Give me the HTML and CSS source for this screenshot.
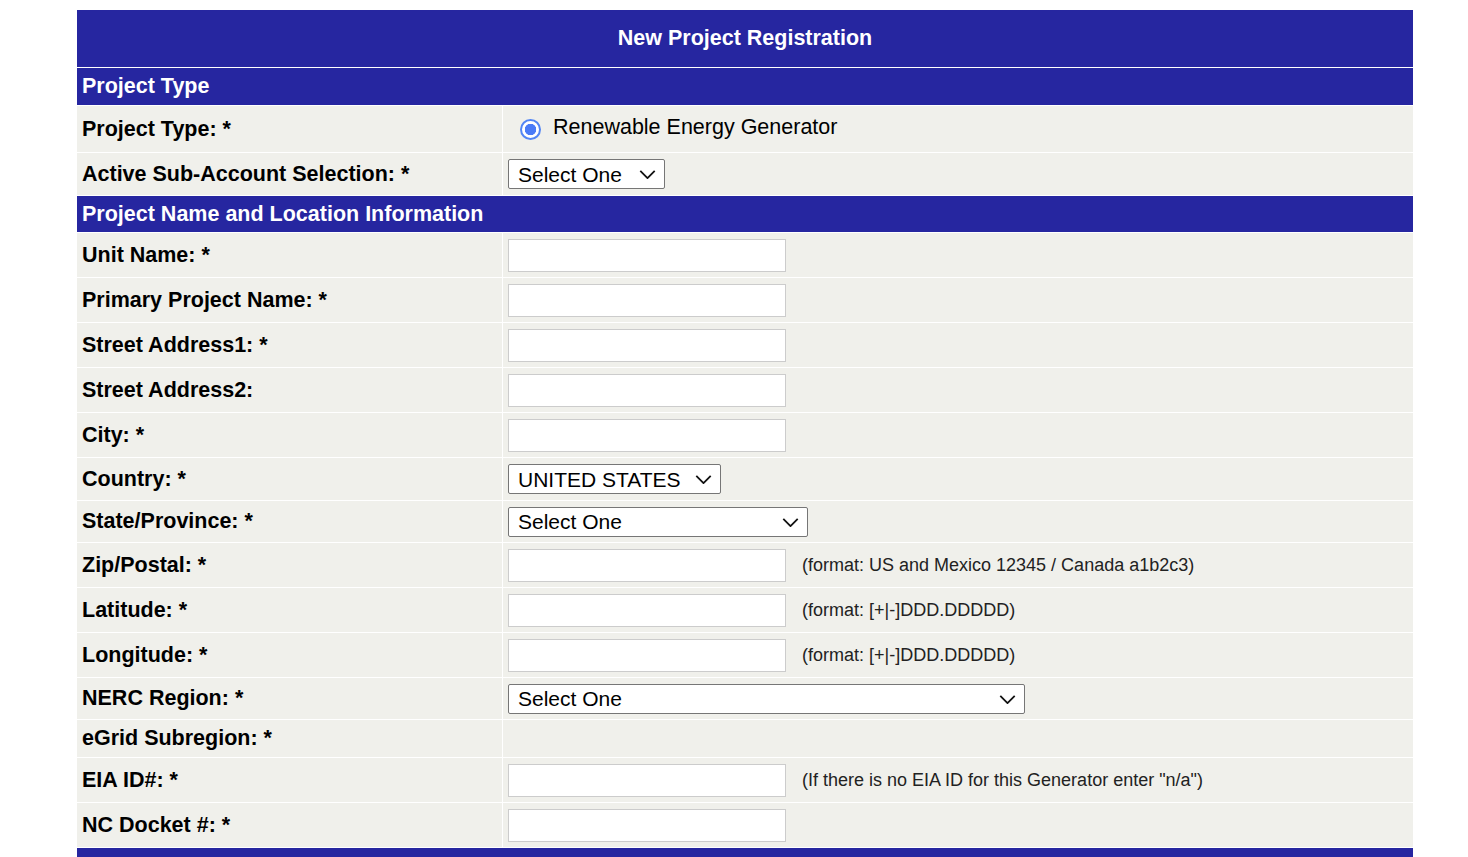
FILE: index.html
```html
<!DOCTYPE html>
<html lang="en">
<head>
  <meta charset="UTF-8">
  <meta name="viewport" content="width=device-width, initial-scale=1.0">
  <title>New Project Registration</title>
  <link rel="stylesheet" href="styles.css">
</head>
<body>
  <form name="newProject" method="POST">
    <table class="reg">
      <tr class="title-row">
        <td colspan="2" class="title">New Project Registration</td>
      </tr>
      <tr class="section-row">
        <td colspan="2" class="section">Project Type</td>
      </tr>
      <tr class="row-type">
        <td class="label">Project Type: *</td>
        <td class="value">
          <label class="radio"><input type="radio" name="projectType" value="REG" checked><span>Renewable Energy Generator</span></label>
        </td>
      </tr>
      <tr class="row-select">
        <td class="label">Active Sub-Account Selection: *</td>
        <td class="value">
          <span class="select-wrap">
            <select name="subAccount" class="sel-sub">
              <option value="">Select One</option>
            </select>
            <svg class="chevron" viewBox="0 0 18 10"><path d="M1 1l8 8 8-8" /></svg>
          </span>
        </td>
      </tr>
      <tr class="section-row">
        <td colspan="2" class="section short">Project Name and Location Information</td>
      </tr>
      <tr class="row-input">
        <td class="label">Unit Name: *</td>
        <td class="value"><input type="text" name="unitName"></td>
      </tr>
      <tr class="row-input">
        <td class="label">Primary Project Name: *</td>
        <td class="value"><input type="text" name="projectName"></td>
      </tr>
      <tr class="row-input">
        <td class="label">Street Address1: *</td>
        <td class="value"><input type="text" name="address1"></td>
      </tr>
      <tr class="row-input">
        <td class="label">Street Address2:</td>
        <td class="value"><input type="text" name="address2"></td>
      </tr>
      <tr class="row-input">
        <td class="label">City: *</td>
        <td class="value"><input type="text" name="city"></td>
      </tr>
      <tr class="row-select">
        <td class="label">Country: *</td>
        <td class="value">
          <span class="select-wrap">
            <select name="country" class="sel-country">
              <option value="US">UNITED STATES</option>
            </select>
            <svg class="chevron" viewBox="0 0 18 10"><path d="M1 1l8 8 8-8" /></svg>
          </span>
        </td>
      </tr>
      <tr class="row-select2">
        <td class="label">State/Province: *</td>
        <td class="value">
          <span class="select-wrap">
            <select name="state" class="sel-state">
              <option value="">Select One</option>
            </select>
            <svg class="chevron" viewBox="0 0 18 10"><path d="M1 1l8 8 8-8" /></svg>
          </span>
        </td>
      </tr>
      <tr class="row-input">
        <td class="label">Zip/Postal: *</td>
        <td class="value"><input type="text" name="zip"><span class="note">(format: US and Mexico 12345 / Canada a1b2c3)</span></td>
      </tr>
      <tr class="row-input">
        <td class="label">Latitude: *</td>
        <td class="value"><input type="text" name="latitude"><span class="note">(format: [+|-]DDD.DDDDD)</span></td>
      </tr>
      <tr class="row-input">
        <td class="label">Longitude: *</td>
        <td class="value"><input type="text" name="longitude"><span class="note">(format: [+|-]DDD.DDDDD)</span></td>
      </tr>
      <tr class="row-select3">
        <td class="label">NERC Region: *</td>
        <td class="value">
          <span class="select-wrap">
            <select name="nerc" class="sel-nerc">
              <option value="">Select One</option>
            </select>
            <svg class="chevron" viewBox="0 0 18 10"><path d="M1 1l8 8 8-8" /></svg>
          </span>
        </td>
      </tr>
      <tr class="row-plain">
        <td class="label">eGrid Subregion: *</td>
        <td class="value"></td>
      </tr>
      <tr class="row-input">
        <td class="label">EIA ID#: *</td>
        <td class="value"><input type="text" name="eiaId"><span class="note">(If there is no EIA ID for this Generator enter "n/a")</span></td>
      </tr>
      <tr class="row-input">
        <td class="label">NC Docket #: *</td>
        <td class="value"><input type="text" name="docket"></td>
      </tr>
      <tr class="section-row">
        <td colspan="2" class="section">&nbsp;</td>
      </tr>
    </table>
  </form>
</body>
</html>
```

FILE: styles.css
```css
body {
  margin: 0;
  background: #fff;
  font-family: Arial, "Liberation Sans", sans-serif;
  color: #000;
}
form {
  margin: 0;
}
.reg {
  border-collapse: separate;
  border-spacing: 1px;
  width: 1338px;
  margin: 9px 0 0 76px;
}
.reg td {
  padding: 0 5px;
  background: #f0f0eb;
  vertical-align: middle;
}
.title-row td.title {
  height: 57px;
  background: #2626a0;
  color: #fff;
  font-weight: bold;
  font-size: 21.5px;
  text-align: center;
}
.section-row td.section {
  height: 37px;
  background: #2626a0;
  color: #fff;
  font-weight: bold;
  font-size: 21.5px;
}
.section-row td.short {
  height: 36px;
}
.label {
  width: 415px;
  font-weight: bold;
  font-size: 21.5px;
}
.row-type td { height: 46px; }
.row-select td { height: 42px; }
.row-select2 td { height: 41px; }
.row-select3 td { height: 41px; }
.row-input td { height: 44px; }
.row-plain td { height: 37px; }

.radio {
  display: inline-flex;
  align-items: center;
  font-size: 21.5px;
}
.radio input {
  appearance: none;
  -webkit-appearance: none;
  box-sizing: border-box;
  width: 21px;
  height: 21px;
  margin: 4px 12px 0 12px;
  border: 2px solid #5285f4;
  border-radius: 50%;
  background: radial-gradient(circle, #4a7bf7 0 5.5px, #fff 6px);
}

.select-wrap {
  position: relative;
  display: inline-block;
  vertical-align: middle;
}
select {
  appearance: none;
  -webkit-appearance: none;
  display: block;
  box-sizing: border-box;
  font-family: Arial, "Liberation Sans", sans-serif;
  font-size: 21px;
  color: #000;
  height: 30px;
  padding: 0 30px 0 9px;
  border: 1px solid #767676;
  border-radius: 2px;
  background: #fff;
}
.chevron {
  position: absolute;
  right: 9px;
  top: 11px;
  width: 17px;
  height: 9px;
  fill: none;
  stroke: #111;
  stroke-width: 2;
  pointer-events: none;
}
.sel-sub { width: 157px; }
.sel-country { width: 213px; }
.sel-state { width: 300px; }
.sel-nerc { width: 517px; }

input[type="text"] {
  box-sizing: border-box;
  width: 278px;
  height: 33px;
  border: 1px solid #cccccc;
  background: #fff;
  margin: 0;
  vertical-align: middle;
}
.note {
  margin-left: 16px;
  font-size: 18px;
  color: #222;
  vertical-align: middle;
}
```
